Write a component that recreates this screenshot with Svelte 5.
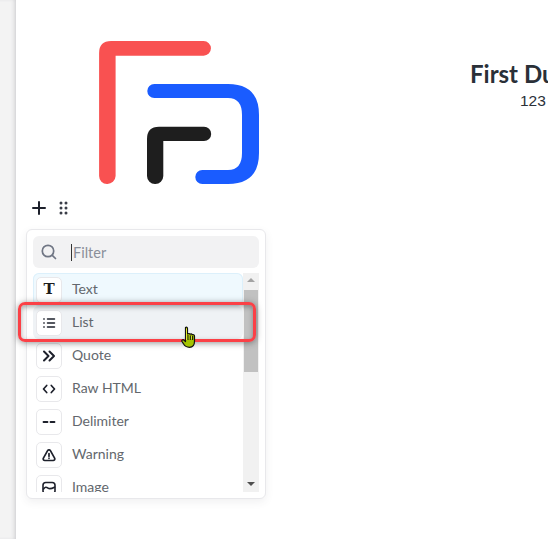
<script>
  const tools = [
    { name: 'Text', icon: 'text' },
    { name: 'List', icon: 'list' },
    { name: 'Quote', icon: 'quote' },
    { name: 'Raw HTML', icon: 'code' },
    { name: 'Delimiter', icon: 'delimiter' },
    { name: 'Warning', icon: 'warning' },
    { name: 'Image', icon: 'image' }
  ];
</script>

<div class="page">
  <div class="gutter"></div>
  <main class="sheet">
    <header class="doc-header">
      <svg class="logo" width="162" height="145" viewBox="99 40 162 145">
        <path fill="#f95151" d="M107 184a7.900 7.900 0 0 1-7.900-7.900V53q0-12 12-12h92.500a7.300 7.300 0 0 1 0 14.700h-88v120.400a8.200 8.200 0 0 1-8.600 7.900z" />
        <path fill="#1a5cff" d="M154.300 84H228q31 0 31 31v38q0 31-31 31h-25.700a7 7 0 0 1 0-14H228q14 0 14-17v-38q0-17-14-17h-73.700a7 7 0 0 1 0-14z" />
        <path fill="#1e1e1e" d="M155.200 184a8 8 0 0 1-8.200-8V139q0-12.300 12-12.300h45a7.200 7.200 0 0 1 0 14.400h-40.700v35a8 8 0 0 1-8.100 7.900z" />
      </svg>
      <div class="doc-title">
        <h1>First Du</h1>
        <p>123</p>
      </div>
    </header>

    <div class="block-tools">
      <svg width="14" height="14" viewBox="0 0 14 14"><path d="M7 1v12M1 7h12" stroke="#1d202b" stroke-width="2" stroke-linecap="round" fill="none" /></svg>
      <svg width="10" height="14" viewBox="0 0 10 14" fill="#3a3d48">
        <circle cx="2" cy="2" r="1.500" /><circle cx="7" cy="2" r="1.500" />
        <circle cx="2" cy="7" r="1.500" /><circle cx="7" cy="7" r="1.500" />
        <circle cx="2" cy="12" r="1.500" /><circle cx="7" cy="12" r="1.500" />
      </svg>
    </div>
  </main>

  <div class="popover">
    <div class="filter">
      <svg width="16" height="16" viewBox="0 0 16 16" fill="none" stroke="#707684" stroke-width="1.700" stroke-linecap="round"><circle cx="7" cy="7" r="5.700" /><path d="M11.300 11.300l3.200 3.200" /></svg>
      <span class="caret"></span>
      <span class="placeholder">Filter</span>
    </div>
    <div class="list-wrap">
      <ul class="tools">
        {#each tools as tool, i}
          <li class="tool" class:selected={i === 0} class:hovered={i === 1}>
            <span class="tool-icon">
              {#if tool.icon === 'text'}
                <span class="glyph-t">T</span>
              {:else if tool.icon === 'list'}
                <svg width="14" height="14" viewBox="0 0 14 14" stroke="#1d202b" stroke-width="1.500" stroke-linecap="round" fill="none">
                  <path d="M5.500 3H12.500M5.500 7H12.500M5.500 11H12.500M1.800 3h.4M1.800 7h.4M1.800 11h.4" />
                </svg>
              {:else if tool.icon === 'quote'}
                <svg width="14" height="14" viewBox="0 0 14 14" stroke="#1d202b" stroke-width="2" stroke-linecap="round" stroke-linejoin="round" fill="none">
                  <path d="M2 2.500L6.500 7L2 11.500M7.500 2.500L12 7L7.500 11.500" />
                </svg>
              {:else if tool.icon === 'code'}
                <svg width="14" height="14" viewBox="0 0 14 14" stroke="#1d202b" stroke-width="1.700" stroke-linecap="round" stroke-linejoin="round" fill="none">
                  <path d="M4.700 3.500L1.500 7l3.200 3.500M9.300 3.500L12.500 7l-3.200 3.500" />
                </svg>
              {:else if tool.icon === 'delimiter'}
                <svg width="14" height="14" viewBox="0 0 14 14" stroke="#1d202b" stroke-width="1.800" stroke-linecap="round" fill="none">
                  <path d="M1.500 7h4M8.500 7h4" />
                </svg>
              {:else if tool.icon === 'warning'}
                <svg width="14" height="14" viewBox="0 0 14 14" stroke="#1d202b" stroke-width="1.700" stroke-linecap="round" stroke-linejoin="round" fill="none">
                  <path d="M5.600 2.600c.6-1.100 2.200-1.100 2.800 0l4.200 7.600c.6 1.100-.2 2.300-1.400 2.300H2.800c-1.200 0-2-1.200-1.400-2.300z" /><path d="M7 5.500v2.700M7 10.200v.1" />
                </svg>
              {:else}
                <svg width="14" height="14" viewBox="0 0 14 14" stroke="#1d202b" stroke-width="1.600" stroke-linecap="round" stroke-linejoin="round" fill="none">
                  <rect x="1" y="1.500" width="12" height="11" rx="2.800" /><path d="M1.500 8c1.400-2.200 2.800-2.200 4.500-.9s3 .9 6.500-.9" />
                </svg>
              {/if}
            </span>
            <span class="tool-name">{tool.name}</span>
          </li>
        {/each}
      </ul>
      <div class="scrollbar">
        <span class="arrow up"></span>
        <span class="thumb"></span>
        <span class="arrow down"></span>
      </div>
    </div>
  </div>

  <div class="highlight"></div>

  <svg class="cursor" width="16" height="23" viewBox="0 0 16 23">
    <path fill="#a4c400" stroke="#111" stroke-width="1.200" stroke-linejoin="round" d="M4.500 1.500c1-.8 2-.3 2 1V8c1-.8 2-.6 2.400.2 1-.6 2-.3 2.300.6 1-.4 2.300 0 2.300 1.500v5c0 3-1.500 6-5 6s-5-1.500-6-3.500L1 15.500c-.8-1.500 1-2.300 2-1.300l1.500 1.300z" />
    <path fill="#e4ec30" d="M5 2.500h1V14H5zM7.500 9h.8v4h-.8zM10 10h.8v3H10z" />
    <path stroke="#111" stroke-width="1" d="M7 9v5M9.300 9.500V14M11.600 10v4" fill="none" />
  </svg>
</div>

<style>
  :global(body) {
    margin: 0;
    overflow: hidden;
    background: #fff;
  }

  .page {
    position: relative;
    display: flex;
    width: 548px;
    height: 539px;
    overflow: hidden;
  }

  .gutter {
    width: 16px;
    flex: none;
    background: #f3f3f3;
    box-shadow: inset -3px 0 4px -2px #c9c9cc;
  }

  .sheet {
    flex: 1;
    min-width: 0;
    background: #fff;
  }

  .doc-header {
    display: flex;
    padding: 40px 0 0 83px;
  }

  .logo {
    display: block;
    flex: none;
  }

  .doc-title {
    margin-left: 209px;
    padding-top: 19px;
    white-space: nowrap;
  }

  h1 {
    margin: 0;
    font: 700 24px/29px 'Lato', 'Noto Sans', sans-serif;
    color: #2a3038;
  }

  .doc-title p {
    margin: 4px 0 0 50px;
    font: 15.500px/18px 'Liberation Sans', sans-serif;
    color: #2a3038;
  }

  .block-tools {
    display: flex;
    align-items: center;
    gap: 13px;
    padding: 7px 0 0 16px;
    height: 32px;
  }

  .popover {
    position: absolute;
    left: 26px;
    top: 229px;
    width: 240px;
    height: 270px;
    box-sizing: border-box;
    padding: 6px;
    background: #fff;
    border: 1px solid #e8e8eb;
    border-radius: 6px;
    box-shadow: 0 3px 8px rgba(60, 60, 80, 0.08);
  }

  .filter {
    display: flex;
    align-items: center;
    height: 32px;
    padding-left: 8px;
    background: #f2f2f3;
    border-radius: 6px;
  }

  .caret {
    width: 1px;
    height: 17px;
    margin-left: 14px;
    background: #333;
  }

  .placeholder {
    margin-left: 1px;
    font: 14.500px 'Lato', sans-serif;
    color: #8a8f99;
  }

  .list-wrap {
    display: flex;
    height: 219px;
    margin-top: 5px;
    overflow: hidden;
  }

  .tools {
    flex: 1;
    margin: 0;
    padding: 0;
    list-style: none;
    overflow: hidden;
  }

  .tool {
    display: flex;
    align-items: center;
    flex: none;
    box-sizing: border-box;
    height: 33px;
    padding: 0 3px;
    border-radius: 6px;
  }

  .tool.selected {
    background: #eff9fe;
    box-shadow: inset 0 0 0 1px #dcf0fb;
  }

  .tool.hovered {
    background: #eff2f5;
  }

  .tool-icon {
    display: flex;
    align-items: center;
    justify-content: center;
    flex: none;
    width: 26px;
    height: 26px;
    box-sizing: border-box;
    background: #fff;
    border: 1px solid #e8e8eb;
    border-radius: 5px;
  }

  .glyph-t {
    font: 700 15px/1 'DejaVu Serif', serif;
    color: #1d1d1d;
  }

  .tool-name {
    margin-left: 10px;
    padding-bottom: 2px;
    font: 14px 'Lato', sans-serif;
    color: #63676d;
  }

  .scrollbar {
    display: flex;
    flex: none;
    flex-direction: column;
    align-items: center;
    width: 16px;
    background: #f1f1f1;
  }

  .thumb {
    width: 14px;
    height: 82px;
    margin-top: 8px;
    background: #c1c1c1;
  }

  .arrow {
    width: 0;
    height: 0;
    border-left: 4px solid transparent;
    border-right: 4px solid transparent;
  }

  .arrow.up {
    margin-top: 5px;
    border-bottom: 4px solid #a3a3a3;
  }

  .arrow.down {
    margin-top: auto;
    margin-bottom: 6px;
    border-top: 4px solid #505050;
  }

  .highlight {
    position: absolute;
    left: 18px;
    top: 302px;
    width: 238px;
    height: 40px;
    box-sizing: border-box;
    border: 3px solid #fb4046;
    border-radius: 7px;
    box-shadow: 0 1px 6px rgba(40, 40, 40, 0.5), inset 0 2px 5px rgba(40, 40, 40, 0.4);
  }

  .cursor {
    position: absolute;
    left: 181px;
    top: 326px;
  }
</style>
